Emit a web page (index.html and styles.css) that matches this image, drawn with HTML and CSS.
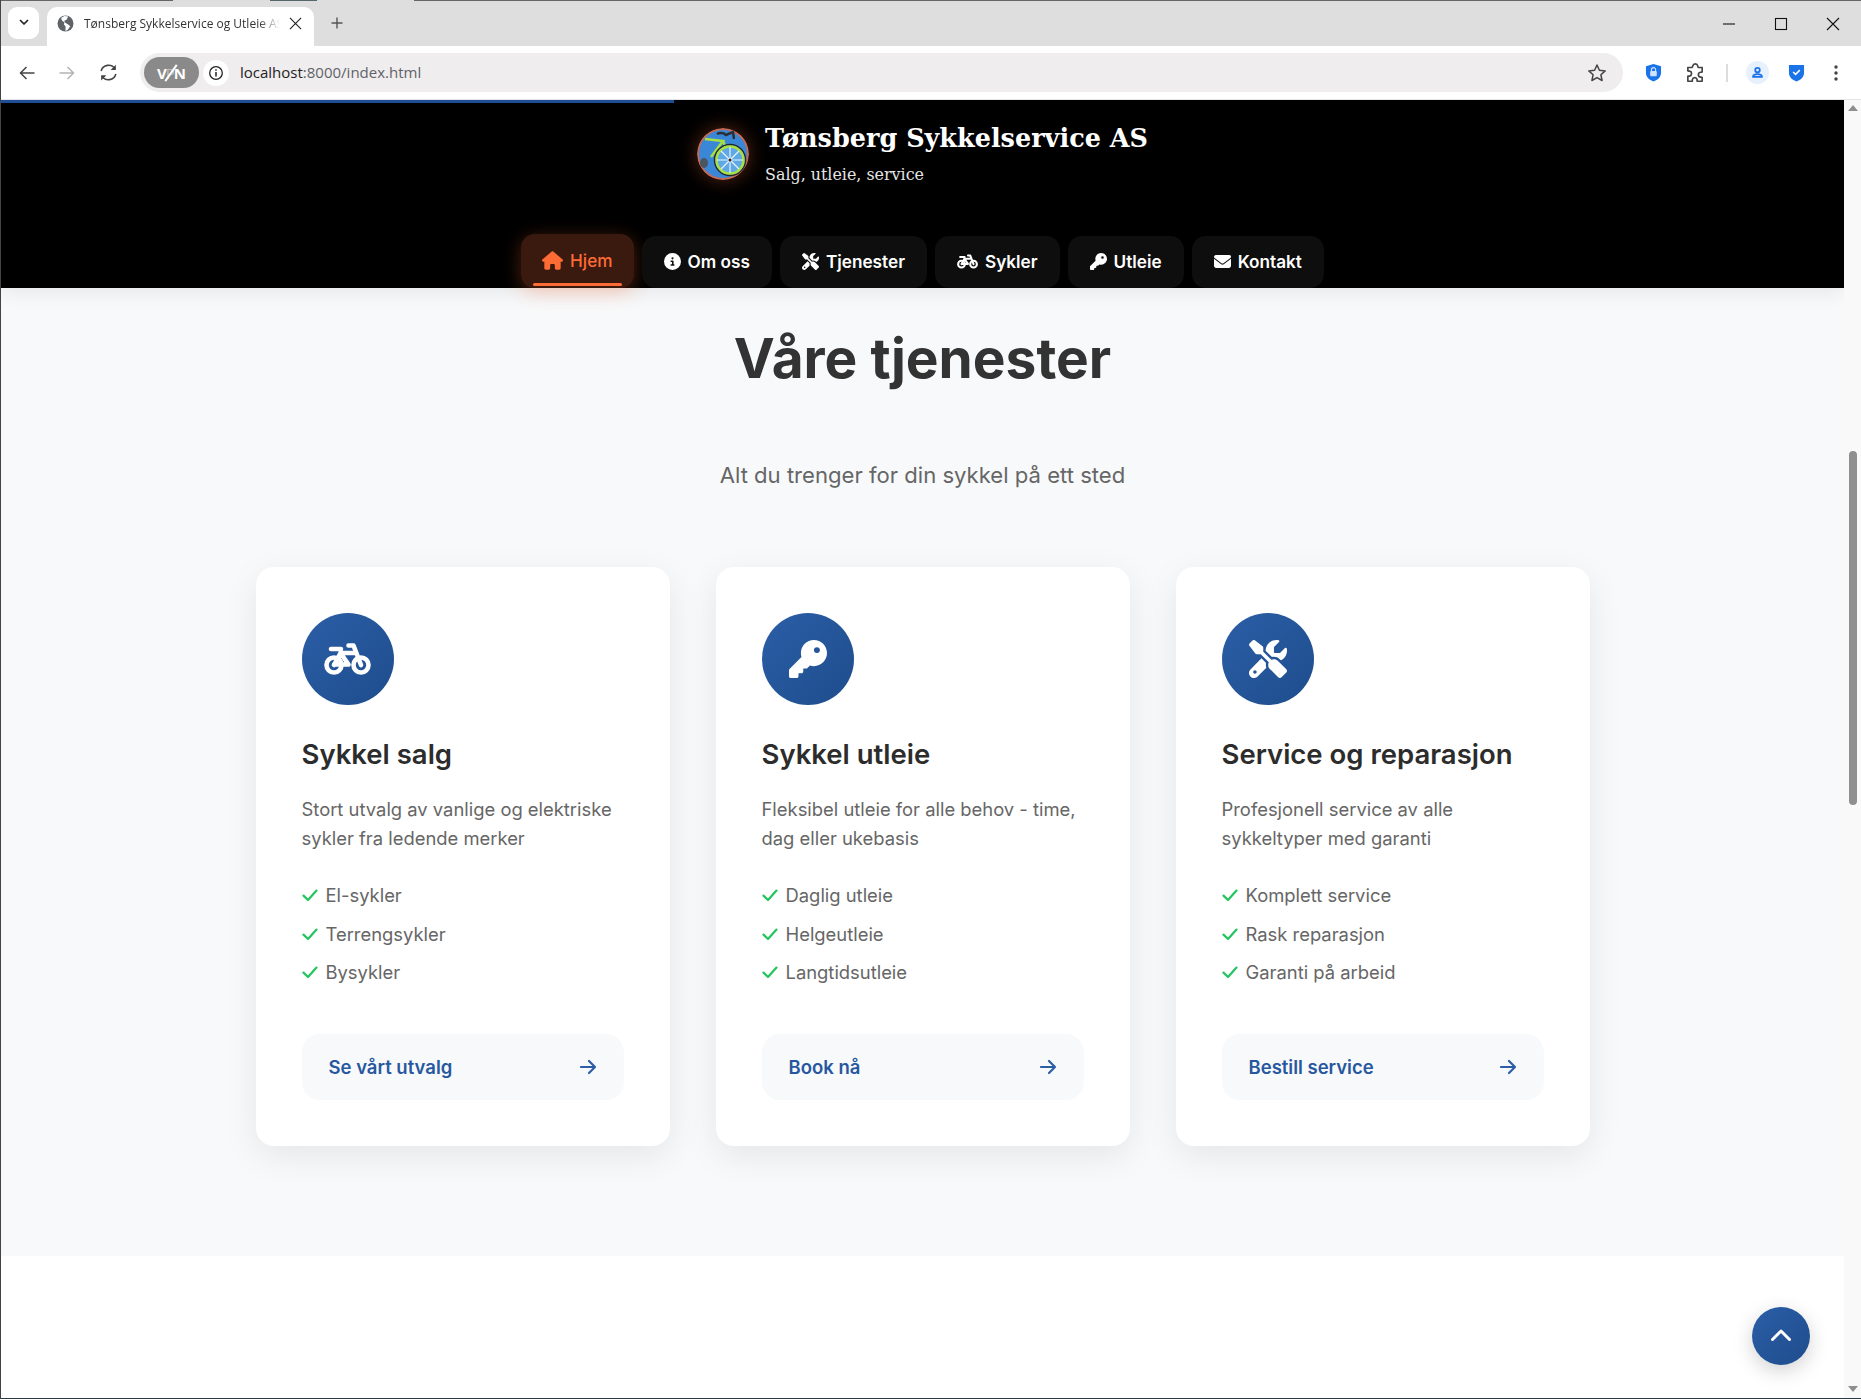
FILE: index.html
```html
<!DOCTYPE html>
<html lang="no">
<head>
<meta charset="utf-8">
<title>Tønsberg Sykkelservice og Utleie AS</title>
<link rel="stylesheet" href="styles.css">
</head>
<body>
<svg class="defs" width="0" height="0" aria-hidden="true">
  <defs>
    <symbol id="i-home" viewBox="0 0 576 512"><path d="M575.8 255.5c0 18-15 32.1-32 32.1h-32l.7 160.2c0 2.700-.2 5.400-.5 8.100V472c0 22.100-17.900 40-40 40H456c-1.100 0-2.200 0-3.300-.1c-1.400 .1-2.800 .1-4.200 .1H416 392c-22.100 0-40-17.900-40-40V448 384c0-17.700-14.300-32-32-32H256c-17.700 0-32 14.300-32 32v64 24c0 22.100-17.900 40-40 40H160 128.100c-1.500 0-3-.1-4.500-.2c-1.200 .1-2.400 .2-3.600 .2H104c-22.100 0-40-17.900-40-40V360c0-.9 0-1.900 .1-2.800V287.600H32c-18 0-32-14-32-32.100c0-9 3-17 10-24L266.400 8c7-7 15-8 22-8s15 2 21 7L564.800 231.500c8 7 12 15 11 24z"/></symbol>
    <symbol id="i-info" viewBox="0 0 512 512"><path d="M256 512A256 256 0 1 0 256 0a256 256 0 1 0 0 512zM216 336h24V272H216c-13.300 0-24-10.700-24-24s10.700-24 24-24h48c13.300 0 24 10.700 24 24v88h8c13.300 0 24 10.700 24 24s-10.700 24-24 24H216c-13.300 0-24-10.700-24-24s10.700-24 24-24zm40-208a32 32 0 1 1 0 64 32 32 0 1 1 0-64z"/></symbol>
    <symbol id="i-tools" viewBox="0 0 512 512"><path d="M78.600 5C69.100-2.400 55.600-1.500 47 7L7 47c-8.500 8.500-9.400 22-2.100 31.600l80 104c4.500 5.900 11.600 9.400 19 9.400h54.100l109 109c-14.700 29-10 65.400 14.300 89.600l112 112c12.500 12.500 32.800 12.500 45.300 0l64-64c12.500-12.500 12.500-32.800 0-45.300l-112-112c-24.200-24.200-60.600-29-89.600-14.300l-109-109V104c0-7.500-3.500-14.500-9.400-19L78.600 5zM19.900 396.100C7.200 408.800 0 426.100 0 444.100C0 481.600 30.400 512 67.900 512c18 0 35.300-7.200 48-19.900L233.700 374.300c-7.800-20.900-9-43.600-3.600-65.100l-61.700-61.700L19.900 396.100zM512 144c0-10.500-1.100-20.700-3.200-30.500c-2.400-11.200-16.100-14.100-24.200-6l-63.900 63.900c-3 3-7.100 4.700-11.300 4.700H352c-8.800 0-16-7.200-16-16V102.600c0-4.200 1.700-8.300 4.700-11.300l63.900-63.900c8.100-8.100 5.200-21.800-6-24.200C388.700 1.100 378.500 0 368 0C288.500 0 224 64.500 224 144l0 .8 85.300 85.300c36-9.100 75.800 .5 104 28.700L429 274.500c49-23 83-72.800 83-130.500zM56 432a24 24 0 1 1 48 0 24 24 0 1 1 -48 0z"/></symbol>
    <symbol id="i-bike" viewBox="0 0 47 32"><g fill="none" stroke="#fff" stroke-width="4.600"><circle cx="10" cy="22" r="7.500"/><circle cx="37" cy="22" r="7.500"/><path d="M10 22 16.500 10 24.500 21.500H10M16.500 10H32M7 6H17M24.500 2.500H29.500L37 22" stroke-linecap="round" stroke-linejoin="round"/></g></symbol>
    <symbol id="i-key" viewBox="0 0 512 512"><path d="M336 352c97.200 0 176-78.800 176-176S433.200 0 336 0S160 78.800 160 176c0 18.700 2.900 36.800 8.300 53.700L7 391c-4.500 4.500-7 10.600-7 17v80c0 13.300 10.700 24 24 24h80c13.300 0 24-10.700 24-24V448h40c13.300 0 24-10.700 24-24V384h40c6.400 0 12.500-2.500 17-7l33.300-33.300c16.900 5.400 35 8.300 53.700 8.300zM376 96a40 40 0 1 1 0 80 40 40 0 1 1 0-80z"/></symbol>
    <symbol id="i-mail" viewBox="0 0 512 512"><path d="M48 64C21.500 64 0 85.500 0 112c0 15.100 7.100 29.300 19.200 38.400L236.800 313.600c11.400 8.500 27 8.500 38.400 0L492.800 150.400c12.100-9.100 19.200-23.300 19.200-38.400c0-26.500-21.500-48-48-48H48zM0 176V384c0 35.300 28.700 64 64 64H448c35.300 0 64-28.700 64-64V176L294.400 339.200c-22.800 17.100-54 17.100-76.800 0L0 176z"/></symbol>
    <symbol id="i-check" viewBox="0 0 16 16"><path d="M1.500 8.600 6 13 14.500 3.600" fill="none" stroke="currentColor" stroke-width="2.200" stroke-linecap="round" stroke-linejoin="round"/></symbol>
    <symbol id="i-arrow" viewBox="0 0 18 18"><path d="M2 9h14M10 3l6 6-6 6" fill="none" stroke="currentColor" stroke-width="2.200" stroke-linecap="round" stroke-linejoin="round"/></symbol>
  </defs>
</svg>
<div class="window">
  <div class="edge"></div>
  <div class="tabstrip">
    <div class="tablist"><svg viewBox="0 0 12 12" class="ico12"><path d="M2.500 4.500 6 8l3.500-3.500" fill="none" stroke="#222" stroke-width="1.700" stroke-linecap="round" stroke-linejoin="round"/></svg></div>
    <div class="tab">
      <svg viewBox="0 0 16 16" class="favicon"><circle cx="8" cy="8" r="7.500" fill="#5f6368"/><path d="M7 1 4 2.500l.5 2.500L7 7l-.5 2L8 10.500V15l2-1 2.500-3.500-2-1.500L7.500 7 6.800 5.500 9 4.500l1.500-3z" fill="#fff"/></svg>
      <span class="tab-title">Tønsberg Sykkelservice og Utleie AS</span>
      <svg viewBox="0 0 14 14" class="tab-x"><path d="M1 1l12 12M13 1 1 13" stroke="#222" stroke-width="1.200" fill="none"/></svg>
    </div>
    <svg viewBox="0 0 14 14" class="newtab"><path d="M7 1.500v11M1.500 7h11" stroke="#555" stroke-width="1.400" fill="none"/></svg>
    <div class="controls">
      <svg viewBox="0 0 14 14" class="ctl"><path d="M1 7h12" stroke="#111" stroke-width="1.100"/></svg>
      <svg viewBox="0 0 14 14" class="ctl"><rect x="1.500" y="1.500" width="11" height="11" fill="none" stroke="#111" stroke-width="1.100"/></svg>
      <svg viewBox="0 0 14 14" class="ctl"><path d="M1 1l12 12M13 1 1 13" stroke="#111" stroke-width="1.100"/></svg>
    </div>
  </div>
  <div class="toolbar">
    <div class="navbtns">
      <svg viewBox="0 0 18 18" class="tb"><path d="M16.500 9H2.500M8.500 3 2.500 9l6 6" fill="none" stroke="#444" stroke-width="1.500"/></svg>
      <svg viewBox="0 0 18 18" class="tb"><path d="M1.500 9h14M9.500 3l6 6-6 6" fill="none" stroke="#b4b4b4" stroke-width="1.500"/></svg>
      <svg viewBox="0 0 20 20" class="tb tb-r"><path d="M3 8.500A7.300 7.300 0 0 1 16.200 6.500M17 11.500A7.300 7.300 0 0 1 3.800 13.500" fill="none" stroke="#444" stroke-width="1.500"/><path d="M17 2.500v5h-5zM3 17.500v-5h5z" fill="#444"/></svg>
    </div>
    <div class="omnibox">
      <span class="vpn">V<span class="vpn-mid">P</span>N</span>
      <span class="site-info"><svg viewBox="0 0 16 16" class="info16"><circle cx="8" cy="8" r="6.300" fill="none" stroke="#222" stroke-width="1.300"/><path d="M8 7v4.500M8 4.300v1.400" stroke="#222" stroke-width="1.500"/></svg></span>
      <span class="url"><span class="url-host">localhost</span>:8000/index.html</span>
      <svg viewBox="0 0 20 20" class="star"><path d="M10 2l2.400 5.300 5.800.6-4.300 3.900 1.200 5.700L10 14.600l-5.100 2.900 1.200-5.700L1.800 7.900l5.800-.6z" fill="none" stroke="#444" stroke-width="1.500" stroke-linejoin="round"/></svg>
    </div>
    <div class="ext">
      <svg viewBox="0 0 18 20" class="ext-shield"><path d="M9 1 17 3.500V10c0 5-3.500 7.800-8 9.500C4.500 17.800 1 15 1 10V3.500z" fill="#1a73e8"/><rect x="5.500" y="8.500" width="7" height="5.500" rx="1" fill="#cfe2fc"/><path d="M6.800 8.500V7a2.200 2.200 0 0 1 4.400 0v1.500" fill="none" stroke="#cfe2fc" stroke-width="1.200"/></svg>
      <svg viewBox="0 0 20 20" class="ext-puzzle"><path d="M8 3.500a2.300 2.300 0 0 1 4.500 0c0 .8 0 1.200.5 1.500h3.500V9c-.5.500-1 .3-1.600.3a2.300 2.300 0 0 0 0 4.500c.6 0 1.100-.2 1.600.2v3.500H12c-.4-.5 0-1-.1-1.600a2.200 2.200 0 0 0-4.300 0c-.1.600.2 1.100-.1 1.600H3.500V13c.6-.4 1-.1 1.600-.2a2.300 2.300 0 0 0 0-4.500c-.6-.1-1.100.2-1.600-.2V5h3.700c.6-.4.800-.8.800-1.500z" fill="none" stroke="#444" stroke-width="1.500" stroke-linejoin="round"/></svg>
      <span class="sep"></span>
      <span class="avatar"><svg viewBox="0 0 16 16" class="ava-i"><circle cx="8" cy="5" r="2.800" fill="none" stroke="#1a73e8" stroke-width="2.200"/><path d="M2.500 13.500c0-2.500 2.500-3.500 5.500-3.500s5.500 1 5.500 3.500z" fill="none" stroke="#1a73e8" stroke-width="2.200" stroke-linejoin="round"/></svg></span>
      <svg viewBox="0 0 18 20" class="ext-shield2"><path d="M1 2h16v8c0 5-3.500 7.800-8 9.500C4.500 17.800 1 15 1 10z" fill="#1a73e8"/><path d="M5.500 9.500 8 12l4.500-4.500" fill="none" stroke="#fff" stroke-width="1.600"/></svg>
      <svg viewBox="0 0 6 18" class="dots"><circle cx="3" cy="3" r="1.700" fill="#444"/><circle cx="3" cy="9" r="1.700" fill="#444"/><circle cx="3" cy="15" r="1.700" fill="#444"/></svg>
    </div>
  </div>
  <div class="viewport">
    <div class="page">
      <div class="progress"></div>
      <header class="site-header">
        <div class="brand">
          <svg viewBox="0 0 52 52" class="logo">
            <circle cx="26" cy="26" r="25" fill="#3a87d8" stroke="#c46a55" stroke-width="2"/>
            <path d="M8 11l18 2-12 16M26 13l6 14" fill="none" stroke="#a8e044" stroke-width="2.500"/>
            <circle cx="33" cy="32" r="15.500" fill="none" stroke="#23282e" stroke-width="1.500"/>
            <circle cx="33" cy="32" r="13.500" fill="#5fa8e6" stroke="#a8e044" stroke-width="2.500"/>
            <path d="M33 19v26M20 32h26M24 23l18 18M42 23 24 41" stroke="#e8f2fb" stroke-width="1.200"/>
            <circle cx="33" cy="32" r="1.500" fill="#222"/>
            <path d="M20 6c3-2 7-1 9 1l7-3 1 7" fill="none" stroke="#2a2e35" stroke-width="2.500"/>
            <ellipse cx="7" cy="35" rx="4" ry="5" fill="#4a5560"/>
          </svg>
          <div class="brand-text">
            <h1 class="brand-name">Tønsberg Sykkelservice AS</h1>
            <p class="brand-tag">Salg, utleie, service</p>
          </div>
        </div>
        <nav class="nav">
          <a class="nav-item active"><svg class="nav-ico home"><use href="#i-home"/></svg>Hjem</a>
          <a class="nav-item"><svg class="nav-ico"><use href="#i-info"/></svg>Om oss</a>
          <a class="nav-item"><svg class="nav-ico"><use href="#i-tools"/></svg>Tjenester</a>
          <a class="nav-item"><svg class="nav-ico wide"><use href="#i-bike"/></svg>Sykler</a>
          <a class="nav-item"><svg class="nav-ico"><use href="#i-key"/></svg>Utleie</a>
          <a class="nav-item"><svg class="nav-ico"><use href="#i-mail"/></svg>Kontakt</a>
        </nav>
      </header>
      <section class="services">
        <h2 class="services-title">Våre tjenester</h2>
        <p class="services-sub">Alt du trenger for din sykkel på ett sted</p>
        <div class="cards">
          <article class="card">
            <div class="card-icon"><svg class="ci ci-bike"><use href="#i-bike"/></svg></div>
            <h3 class="card-title">Sykkel salg</h3>
            <p class="card-text">Stort utvalg av vanlige og elektriske sykler fra ledende merker</p>
            <ul class="features">
              <li><svg class="check"><use href="#i-check"/></svg>El-sykler</li>
              <li><svg class="check"><use href="#i-check"/></svg>Terrengsykler</li>
              <li><svg class="check"><use href="#i-check"/></svg>Bysykler</li>
            </ul>
            <a class="card-btn">Se vårt utvalg<svg class="arrow"><use href="#i-arrow"/></svg></a>
          </article>
          <article class="card">
            <div class="card-icon"><svg class="ci"><use href="#i-key"/></svg></div>
            <h3 class="card-title">Sykkel utleie</h3>
            <p class="card-text">Fleksibel utleie for alle behov - time, dag eller ukebasis</p>
            <ul class="features">
              <li><svg class="check"><use href="#i-check"/></svg>Daglig utleie</li>
              <li><svg class="check"><use href="#i-check"/></svg>Helgeutleie</li>
              <li><svg class="check"><use href="#i-check"/></svg>Langtidsutleie</li>
            </ul>
            <a class="card-btn">Book nå<svg class="arrow"><use href="#i-arrow"/></svg></a>
          </article>
          <article class="card">
            <div class="card-icon"><svg class="ci"><use href="#i-tools"/></svg></div>
            <h3 class="card-title">Service og reparasjon</h3>
            <p class="card-text">Profesjonell service av alle sykkeltyper med garanti</p>
            <ul class="features">
              <li><svg class="check"><use href="#i-check"/></svg>Komplett service</li>
              <li><svg class="check"><use href="#i-check"/></svg>Rask reparasjon</li>
              <li><svg class="check"><use href="#i-check"/></svg>Garanti på arbeid</li>
            </ul>
            <a class="card-btn">Bestill service<svg class="arrow"><use href="#i-arrow"/></svg></a>
          </article>
        </div>
      </section>
      <a class="to-top"><svg viewBox="0 0 22 14" class="to-top-i"><path d="M2.500 11.500 11 3l8.500 8.500" fill="none" stroke="#fff" stroke-width="3" stroke-linecap="round" stroke-linejoin="round"/></svg></a>
    </div>
    <div class="scrollbar">
      <span class="sb-up"></span>
      <span class="sb-thumb"></span>
      <span class="sb-down"></span>
    </div>
  </div>
</div>
</body>
</html>
```
FILE: styles.css
```css
* { box-sizing: border-box; }
html, body { margin: 0; padding: 0; background: #fff; }
body { font-family: "Inter", "Liberation Sans", sans-serif; overflow: hidden; }
.defs { position: absolute; }
.window { width: 1861px; height: 1399px; display: flex; flex-direction: column; overflow: hidden; border-left: 1px solid #444; border-bottom: 1px solid #2b3a40; background: #fff; }
.edge { height: 1px; flex: none; background: linear-gradient(90deg, #666 0 172px, #ddd 172px 269px, #55676c 269px 316px, #ddd 316px 413px, #666 413px); }
.tabstrip { height: 45px; flex: none; background: #dedede; display: flex; align-items: flex-start; padding: 6px 0 0 7px; }
.tablist { width: 31px; height: 32px; background: #fff; border-radius: 9px; display: flex; align-items: center; justify-content: center; flex: none; }
.ico12 { width: 12px; height: 12px; margin-bottom: 2px; }
.tab { width: 267px; height: 39px; margin-left: 8px; background: #fff; border-radius: 10px 10px 0 0; display: flex; align-items: center; padding: 0 0 6px 10px; flex: none; }
.favicon { width: 17px; height: 17px; flex: none; }
.tab-title { font: 12px "Open Sans", sans-serif; color: #333; margin-left: 10px; width: 196px; flex: none; white-space: nowrap; overflow: hidden; -webkit-mask-image: linear-gradient(90deg, #000 175px, transparent 196px); mask-image: linear-gradient(90deg, #000 175px, transparent 196px); }
.tab-x { width: 13px; height: 13px; flex: none; margin-left: 9px; }
.newtab { width: 14px; height: 14px; margin: 9px 0 0 16px; flex: none; }
.controls { margin-left: auto; display: flex; gap: 38px; padding: 10px 21px 0 0; }
.ctl { width: 14px; height: 14px; display: block; }
.toolbar { height: 54px; flex: none; background: #fff; border-radius: 10px 10px 0 0; display: flex; align-items: center; border-bottom: 1px solid #e5e5e5; }
.navbtns { display: flex; align-items: center; gap: 22px; padding-left: 17px; width: 139px; flex: none; }
.tb { width: 18px; height: 18px; flex: none; }
.tb-r { width: 21px; height: 21px; }
.omnibox { width: 1483px; height: 39px; flex: none; background: #efedee; border-radius: 20px; display: flex; align-items: center; padding: 0 16px 0 4px; }
.vpn { width: 55px; height: 31px; background: #8a8a8a; border-radius: 16px; color: #fff; font: 700 15px "Open Sans", sans-serif; display: flex; align-items: center; justify-content: center; flex: none; }
.vpn-mid { font-weight: 400; color: #bdbdbd; position: relative; margin: 0 -1px; }
.vpn-mid::after { content: ""; position: absolute; left: 50%; top: 0; width: 2px; height: 100%; background: #fff; transform: rotate(35deg); }
.site-info { width: 26px; height: 26px; margin-left: 4px; background: #fff; border-radius: 50%; display: flex; align-items: center; justify-content: center; flex: none; }
.info16 { width: 16px; height: 16px; }
.url { font: 15px "Open Sans", sans-serif; color: #5f6368; margin-left: 11px; padding-bottom: 2px; }
.url-host { color: #222; }
.star { width: 20px; height: 20px; margin-left: auto; flex: none; }
.ext { display: flex; align-items: center; flex: 1; padding-left: 22px; }
.ext-shield { width: 17px; height: 19px; flex: none; }
.ext-puzzle { width: 22px; height: 22px; flex: none; margin-left: 22px; }
.sep { width: 2px; height: 18px; background: #dcdcdc; margin-left: 20px; flex: none; }
.avatar { width: 23px; height: 23px; border-radius: 50%; background: #e6f1fd; margin-left: 18px; display: flex; align-items: center; justify-content: center; flex: none; }
.ava-i { width: 13px; height: 13px; }
.ext-shield2 { width: 17px; height: 19px; margin-left: 19px; flex: none; }
.dots { width: 6px; height: 18px; margin-left: 28px; flex: none; }

.viewport { flex: 1; min-height: 0; display: flex; }
.page { width: 1843px; flex: none; position: relative; overflow: hidden; background: #fff; }
.scrollbar { flex: 1; background: #f9f9f9; position: relative; display: flex; flex-direction: column; align-items: center; }
.sb-up { width: 0; height: 0; border: 5px solid transparent; border-top: 0; border-bottom: 6px solid #8f8f8f; margin-top: 5px; flex: none; }
.sb-thumb { width: 8px; height: 354px; background: #8f8f8f; border-radius: 4px; margin-top: 340px; flex: none; }
.sb-down { width: 0; height: 0; border: 5px solid transparent; border-bottom: 0; border-top: 6px solid #8f8f8f; margin-top: auto; margin-bottom: 6px; flex: none; }
.progress { position: absolute; left: 0; top: 0; width: 673px; height: 3px; background: #1e4f96; z-index: 5; }

.site-header { position: relative; z-index: 2; height: 188px; background: #000; box-shadow: 0 4px 20px rgba(0,0,0,.08); display: flex; flex-direction: column; align-items: center; padding-top: 20px; }
.brand { display: flex; align-items: flex-start; gap: 16px; height: 76px; }
.logo { width: 52px; height: 52px; margin-top: 8px; border-radius: 50%; box-shadow: 0 0 18px rgba(255,107,53,.35); flex: none; }
.brand-name { margin: 0; font: 700 25.500px/36px "DejaVu Serif", serif; color: #fff; white-space: nowrap; }
.brand-tag { margin: 7px 0 0; font: 400 15.900px/24px "DejaVu Serif", serif; color: #e6e6e6; }
.nav { display: flex; gap: 8px; margin-top: 40px; }
.nav-item { height: 52px; padding: 0 22px 2px; display: flex; align-items: center; gap: 7px; background: #0e0e0e; border-radius: 14px; color: #fff; font-weight: 600; font-size: 17.200px; white-space: nowrap; position: relative; }
.nav-ico { width: 17px; height: 17px; fill: currentColor; flex: none; }
.nav-ico.home { width: 21px; height: 19px; }
.nav-ico.wide { width: 21px; }
.nav-item.active { color: #ff6b35; background: #3a1a0e; transform: translateY(-2px); height: 54px; margin-bottom: -2px; padding: 0 21px 2px; box-shadow: 0 4px 18px rgba(255,107,53,.3); font-weight: 500; }
.nav-item.active::after { content: ""; position: absolute; left: 12px; right: 12px; bottom: 2px; height: 3px; border-radius: 2px; background: #ff6b35; }

.services { background: #f8f9fa; padding: 37px 0 0; height: 968px; }
.services-title { margin: 0; text-align: center; font-weight: 700; font-size: 55px; line-height: 67px; color: #333; }
.services-sub { margin: 66px 0 0; text-align: center; font-size: 22.100px; line-height: 34px; color: #666; }
.cards { display: flex; gap: 46px; justify-content: center; margin-top: 75px; }
.card { width: 414px; height: 579px; background: #fff; border-radius: 18px; padding: 46px; box-shadow: 0 10px 35px rgba(0,0,0,.08); }
.card-icon { width: 92px; height: 92px; border-radius: 50%; background: linear-gradient(135deg, #2b5ea7, #1e4d8c); display: flex; align-items: center; justify-content: center; }
.ci { width: 38px; height: 38px; fill: #fff; }
.ci-bike { width: 47px; height: 32px; }
.card-title { margin: 32px 0 0; font-weight: 600; font-size: 27.500px; line-height: 34px; color: #2c2c2c; }
.card-text { margin: 24px 0 0; font-size: 18.400px; line-height: 29px; color: #666; }
.features { list-style: none; margin: 23px 0 0; padding: 0; }
.features li { height: 38.500px; display: flex; align-items: center; gap: 8px; font-size: 18.400px; color: #666; }
.check { width: 16px; height: 16px; color: #22c55e; flex: none; }
.card-btn { margin-top: 42px; height: 66px; padding: 0 27px; background: #f8f9fa; border-radius: 18px; display: flex; align-items: center; justify-content: space-between; color: #27589f; font-weight: 600; font-size: 18.500px; }
.arrow { width: 18px; height: 18px; color: #2b5ea7; flex: none; }

.to-top { position: absolute; left: 1751px; top: 1207px; width: 58px; height: 58px; border-radius: 50%; background: linear-gradient(135deg, #2b5ea7, #1e4d8c); box-shadow: 0 6px 20px rgba(0,0,0,.18); display: flex; align-items: center; justify-content: center; z-index: 4; }
.to-top-i { width: 22px; height: 14px; margin-bottom: 2px; }
```
